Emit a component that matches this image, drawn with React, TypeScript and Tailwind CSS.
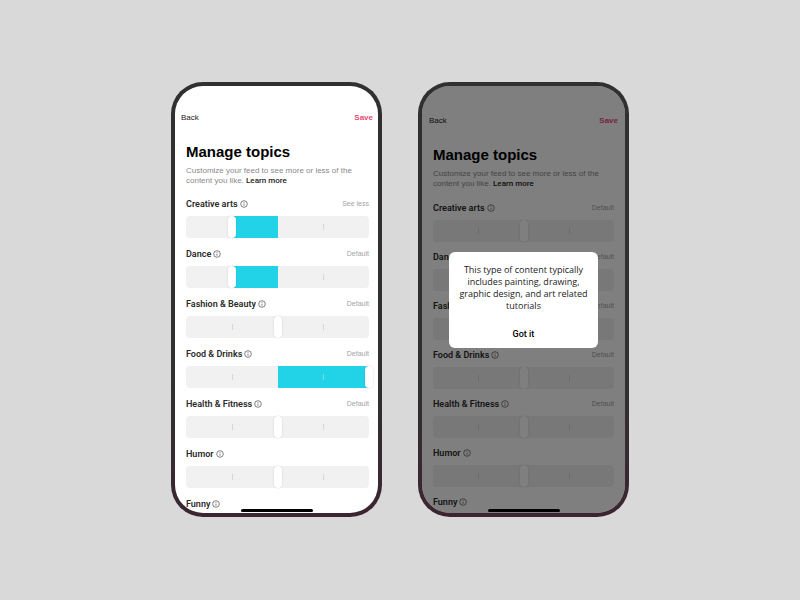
import { useId, useState } from 'react';

type Topic = { name: string; status?: string; value: number };

const mixedTopics: Topic[] = [
  { name: 'Creative arts', status: 'See less', value: 25 },
  { name: 'Dance', status: 'Default', value: 25 },
  { name: 'Fashion & Beauty', status: 'Default', value: 50 },
  { name: 'Food & Drinks', status: 'Default', value: 100 },
  { name: 'Health & Fitness', status: 'Default', value: 50 },
  { name: 'Humor', value: 50 },
];

const defaultTopics: Topic[] = mixedTopics.map((t) => ({
  name: t.name,
  status: t.status && 'Default',
  value: 50,
}));

function InfoIcon() {
  return (
    <svg viewBox="0 0 16 16" className="size-2 text-[#555]" fill="none" stroke="currentColor" strokeWidth="1.5" aria-hidden="true">
      <circle cx="8" cy="8" r="6.6" />
      <path d="M8 7.2v4.3M8 4.4v1.6" />
    </svg>
  );
}

function TopicName({ name, id }: { name: string; id?: string }) {
  return (
    <div className="flex items-center gap-0.5">
      <label htmlFor={id} className="font-['Roboto',sans-serif] text-[9px] leading-3 font-semibold text-[#2a2a2a]">
        {name}
      </label>
      <button type="button" aria-label={`About ${name}`}>
        <InfoIcon />
      </button>
    </div>
  );
}

function TopicSlider({ topic }: { topic: Topic }) {
  const id = useId();
  const [value, setValue] = useState(topic.value);
  const start = Math.min(value, 50);
  return (
    <li className="flex flex-col gap-1.5">
      <div className="flex items-center justify-between">
        <TopicName name={topic.name} id={id} />
        {topic.status && <span className="text-[7px] leading-3 text-[#a3a3a3]">{topic.status}</span>}
      </div>
      <div className="relative h-[22px] rounded-[4px] bg-[#f1f1f1]">
        <div className="absolute inset-y-0 bg-[#22d3e8]" style={{ left: `${start}%`, width: `${Math.abs(value - 50)}%` }} />
        <div className="absolute inset-0 grid grid-cols-4 items-center">
          <span />
          <span className="h-1.5 w-px bg-[#d6d6d6]" />
          <span />
          <span className={value > 75 ? 'h-1.5 w-px bg-[#6fdcea]' : 'h-1.5 w-px bg-[#d6d6d6]'} />
        </div>
        <input
          id={id}
          type="range"
          min={0}
          max={100}
          value={value}
          onChange={(e) => setValue(Number(e.target.value))}
          className="absolute inset-y-0 -left-1 h-full w-[calc(100%+8px)] cursor-pointer appearance-none bg-transparent [&::-webkit-slider-thumb]:h-[22px] [&::-webkit-slider-thumb]:w-2 [&::-webkit-slider-thumb]:appearance-none [&::-webkit-slider-thumb]:rounded-full [&::-webkit-slider-thumb]:bg-white [&::-webkit-slider-thumb]:shadow-[0_0_2px_rgba(0,0,0,0.16)]"
        />
      </div>
    </li>
  );
}

function ContentDialog({ onClose }: { onClose: () => void }) {
  return (
    <div className="absolute inset-0 flex items-center justify-center bg-black/50 pt-px">
      <div
        role="dialog"
        aria-label="Creative arts"
        className="flex w-[149px] flex-col items-center gap-4 rounded-md bg-white px-2 pt-3 pb-2 text-center font-['Open_Sans',sans-serif] text-[9px] leading-3 text-[#222]"
      >
        <p>This type of content typically includes painting, drawing, graphic design, and art related tutorials</p>
        <button type="button" onClick={onClose} className="font-['Roboto',sans-serif] font-medium text-black">
          Got it
        </button>
      </div>
    </div>
  );
}

function Phone({ topics, dialog = false }: { topics: Topic[]; dialog?: boolean }) {
  const [open, setOpen] = useState(dialog);
  return (
    <section className="w-[211px] rounded-[32px] bg-linear-to-b from-[#303030] from-70% to-[#3b2530] p-1">
      <div className="relative h-full overflow-hidden rounded-[28px] bg-white">
        <div className={dialog ? 'pt-[29px]' : 'pt-[26px]'}>
          <header className={dialog ? 'flex justify-between px-[7px] text-[8px] leading-3' : 'flex justify-between pr-[5px] pl-1.5 text-[8px] leading-3'}>
            <button type="button" className="text-[#222]">Back</button>
            <button type="button" className="font-bold text-[#ea4c74]">Save</button>
          </header>
          <main className={dialog ? 'px-[11px] pt-[18px]' : 'pt-[18px] pr-[9px] pb-[3px] pl-[11px]'}>
            <h1 className="text-[15px] leading-5 font-bold text-black">Manage topics</h1>
            <p className="pt-1 text-[8px] leading-[10px] text-[#8a8a8a]">
              Customize your feed to see more or less of the content you like.{' '}
              <a href="#learn-more" className="font-['Roboto',sans-serif] font-medium text-[#222]">Learn more</a>
            </p>
            <ul className={dialog ? 'flex flex-col gap-[9px] pt-[13px]' : 'flex flex-col gap-2.5 pt-3'}>
              {topics.map((topic) => (
                <TopicSlider key={topic.name} topic={topic} />
              ))}
              <li>
                <TopicName name="Funny" />
              </li>
            </ul>
          </main>
        </div>
        {open && <ContentDialog onClose={() => setOpen(false)} />}
        <div className="absolute inset-x-0 bottom-px mx-auto h-[3px] w-[72px] rounded-full bg-black" />
      </div>
    </section>
  );
}

export default function App() {
  return (
    <div className="flex min-h-screen items-center justify-center bg-[#d9d9d9] pb-px font-['Liberation_Sans',Arial,sans-serif]">
      <div className="flex gap-9">
        <Phone topics={mixedTopics} />
        <Phone topics={defaultTopics} dialog />
      </div>
    </div>
  );
}
